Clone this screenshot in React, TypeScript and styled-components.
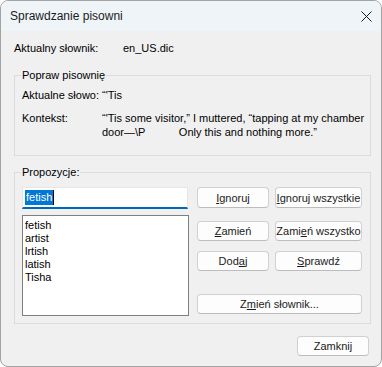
import styled, { createGlobalStyle } from 'styled-components';

const GlobalStyle = createGlobalStyle`
    html, body {
        margin: 0;
        padding: 0;
        background: #ffffff;
    }
    body {
        font-family: "Liberation Sans", Arial, sans-serif;
        font-size: 11px;
        color: #000000;
    }
`;

const Window = styled.div`
    width: 382px;
    height: 367px;
    box-sizing: border-box;
    border: 1px solid #a3a3a3;
    border-radius: 8px;
    overflow: hidden;
    background: #f0f0f0;
    display: flex;
    flex-direction: column;
`;
const TitleBar = styled.div`
    height: 30px;
    flex: none;
    background: #eff4f9;
    display: flex;
    align-items: center;
    justify-content: space-between;
    padding: 0 9px 0 9px;
    font-size: 12px;
    color: #1b1b1b;
`;
const CloseIcon = styled.svg`
    width: 11px;
    height: 11px;
    margin-top: 1px;
`;
const Body = styled.div`
    flex: 1;
    display: flex;
    flex-direction: column;
    padding: 10px 12px 0 12px;
`;
const InfoRow = styled.div<{ $labelWidth: number }>`
    display: grid;
    grid-template-columns: ${p => p.$labelWidth}px auto;
    line-height: 14px;
`;
const DictRow = styled(InfoRow)`
    padding-left: 1px;
`;
const GroupBox = styled.fieldset<{ $top: number; $bottom: number }>`
    margin: ${p => p.$top}px 0 0 1px;
    width: 357px;
    box-sizing: border-box;
    border: 1px solid #dcdcdc;
    padding: 0 7px ${p => p.$bottom}px 7px;
    min-width: 0;
`;
const Legend = styled.legend`
    padding: 0 1px;
    margin-left: -1px;
    line-height: 14px;
`;
const Rows = styled.div<{ $top: number }>`
    display: flex;
    flex-direction: column;
    gap: 9px;
    padding-top: ${p => p.$top}px;
`;
const Context = styled.div`
    white-space: pre;
`;
const SuggestGrid = styled.div`
    display: grid;
    grid-template-columns: 167px 1fr;
    column-gap: 8px;
    padding-top: 8px;
`;
const LeftColumn = styled.div`
    display: flex;
    flex-direction: column;
    gap: 6px;
`;
const WordBox = styled.div`
    height: 22px;
    box-sizing: border-box;
    width: 166px;
    background: #ffffff;
    border: 1px solid #e6e6e6;
    border-bottom: 2px solid #0067c0;
    display: flex;
    align-items: center;
    padding-left: 2px;
    padding-bottom: 1px;
`;
const Selected = styled.span`
    background: #0078d7;
    color: #ffffff;
    line-height: 15px;
    padding: 0 1px;
`;
const Caret = styled.span`
    width: 1px;
    height: 15px;
    background: #000000;
`;
const ListBox = styled.div`
    height: 101px;
    box-sizing: border-box;
    background: #ffffff;
    border: 1px solid #7f7f7f;
    padding: 3px 2px;
    line-height: 13px;
`;
const ButtonColumn = styled.div`
    display: flex;
    flex-direction: column;
`;
const ButtonRow = styled.div<{ $top: number }>`
    display: grid;
    grid-template-columns: 72px 87px;
    column-gap: 6px;
    margin-top: ${p => p.$top}px;
`;
const Button = styled.button<{ $height: number; $span?: boolean }>`
    height: ${p => p.$height}px;
    box-sizing: border-box;
    grid-column: ${p => (p.$span ? '1 / span 2' : 'auto')};
    background: #fdfdfd;
    border: 1px solid #d0d0d0;
    border-bottom-color: #bcbcbc;
    border-radius: 4px;
    font-family: "Liberation Sans", Arial, sans-serif;
    font-size: 11px;
    color: #1b1b1b;
    padding: 0;
    white-space: nowrap;
`;
const Footer = styled.div`
    display: flex;
    justify-content: flex-end;
    padding-top: 12px;
`;
const CloseButton = styled(Button)`
    width: 72px;
`;

const suggestions = ['fetish', 'artist', 'lrtish', 'latish', 'Tisha'];

const App = () => {
    return (
        <>
            <GlobalStyle />
            <Window>
                <TitleBar>
                    <span>Sprawdzanie pisowni</span>
                    <CloseIcon viewBox="0 0 11 11">
                        <path d="M0.5 0.5 L10.5 10.5 M10.5 0.5 L0.5 10.5" stroke="#1b1b1b" strokeWidth="1" fill="none" />
                    </CloseIcon>
                </TitleBar>
                <Body>
                    <DictRow $labelWidth={109}>
                        <span>Aktualny słownik:</span>
                        <span>en_US.dic</span>
                    </DictRow>

                    <GroupBox $top={13} $bottom={16}>
                        <Legend>Popraw pisownię</Legend>
                        <Rows $top={6}>
                            <InfoRow $labelWidth={80}>
                                <span>Aktualne słowo:</span>
                                <span>“'Tis</span>
                            </InfoRow>
                            <InfoRow $labelWidth={80}>
                                <span>Kontekst:</span>
                                <Context>
                                    {'“\'Tis some visitor,” I muttered, “tapping at my chamber'}
                                    <br />
                                    {'door—\\P           Only this and nothing more.”'}
                                </Context>
                            </InfoRow>
                        </Rows>
                    </GroupBox>

                    <GroupBox $top={9} $bottom={7}>
                        <Legend>Propozycje:</Legend>
                        <SuggestGrid>
                            <LeftColumn>
                                <WordBox>
                                    <Selected>fetish</Selected>
                                    <Caret />
                                </WordBox>
                                <ListBox>
                                    {suggestions.map(s => (
                                        <div key={s}>{s}</div>
                                    ))}
                                </ListBox>
                            </LeftColumn>
                            <ButtonColumn>
                                <ButtonRow $top={0}>
                                    <Button $height={21}><u>I</u>gnoruj</Button>
                                    <Button $height={21}><u>I</u>gnoruj wszystkie</Button>
                                </ButtonRow>
                                <ButtonRow $top={13}>
                                    <Button $height={20}><u>Z</u>amień</Button>
                                    <Button $height={20}>Zami<u>e</u>ń wszystko</Button>
                                </ButtonRow>
                                <ButtonRow $top={10}>
                                    <Button $height={20}>Dod<u>a</u>j</Button>
                                    <Button $height={20}><u>S</u>prawdź</Button>
                                </ButtonRow>
                                <ButtonRow $top={23}>
                                    <Button $height={20} $span>Z<u>m</u>ień słownik...</Button>
                                </ButtonRow>
                            </ButtonColumn>
                        </SuggestGrid>
                    </GroupBox>

                    <Footer>
                        <CloseButton $height={20}>Zamknij</CloseButton>
                    </Footer>
                </Body>
            </Window>
        </>
    );
};

export default App;
